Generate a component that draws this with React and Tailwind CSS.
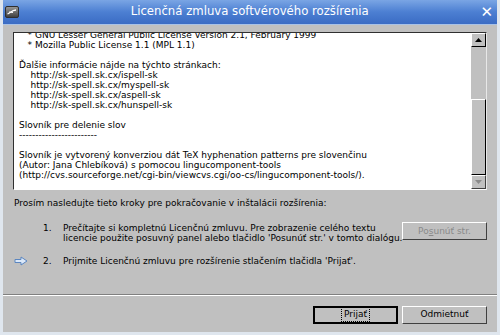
import React from "react";

const font = { fontFamily: '"DejaVu Sans", sans-serif' };

const licenseLines = [
  "   * GNU Lesser General Public License Version 2.1, February 1999",
  "   * Mozilla Public License 1.1 (MPL 1.1)",
  "",
  "Ďalšie informácie nájde na týchto stránkach:",
  "    http://sk-spell.sk.cx/ispell-sk",
  "    http://sk-spell.sk.cx/myspell-sk",
  "    http://sk-spell.sk.cx/aspell-sk",
  "    http://sk-spell.sk.cx/hunspell-sk",
  "",
  "Slovník pre delenie slov",
  "------------------------",
  "",
  "Slovník je vytvorený konverziou dát TeX hyphenation patterns pre slovenčinu",
  "(Autor: Jana Chlebíková) s pomocou lingucomponent-tools",
  "(http://cvs.sourceforge.net/cgi-bin/viewcvs.cgi/oo-cs/lingucomponent-tools/).",
];

const WindowIcon = () => (
  <svg width="14" height="12" viewBox="0 0 14 12">
    <defs>
      <linearGradient id="wi" x1="0" y1="0" x2="0" y2="1">
        <stop offset="0" stopColor="#9a9a9a" />
        <stop offset="1" stopColor="#3c3c3c" />
      </linearGradient>
    </defs>
    <rect x="0.5" y="0.5" width="13" height="11" rx="1.5" fill="url(#wi)" stroke="#2e2e2e" />
    <path d="M2.5 8 C5 7 7 4 11 4" stroke="#fff" strokeWidth="1.3" fill="none" />
    <path d="M4 6 L8 6.5" stroke="#fff" strokeWidth="1" fill="none" />
  </svg>
);

const ArrowIcon = () => (
  <svg width="14" height="10" viewBox="0 0 14 10">
    <path
      d="M1 3.5 H7 V1 L13 5 L7 9 V6.5 H1 Z"
      fill="#dbe8f8"
      stroke="#5b86c0"
      strokeWidth="1"
      strokeLinejoin="round"
    />
  </svg>
);

const Triangle = ({ up, color }) => (
  <svg width="7" height="4" viewBox="0 0 7 4">
    <path d={up ? "M0 4 L3.5 0 L7 4 Z" : "M0 0 L3.5 4 L7 0 Z"} fill={color} />
  </svg>
);

const Button = ({ children, isDefault, disabled }) => (
  <div
    className={`w-[85px] h-[18px] shrink-0 flex items-center justify-center text-[9px] bg-[#c0c0c0] ${
      isDefault
        ? "border-2 border-black"
        : "border border-t-white border-l-white border-r-[#404040] border-b-[#404040]"
    } ${disabled ? "text-[#8a8a8a]" : "text-black"}`}
  >
    {children}
  </div>
);

export default function App() {
  return (
    <div
      className="w-[500px] h-[335px] flex flex-col bg-[#c0c0c0] border-x-[3px] border-b-[3px] border-[#dfe6ee] overflow-hidden"
      style={font}
    >
      <div className="h-[25px] -mx-[3px] flex items-center px-[5px] bg-gradient-to-b from-[#7aa5e4] via-[#4c7fd2] to-[#3b6cc4] border-b border-[#a9c2e6]">
        <WindowIcon />
        <div className="flex-1 text-center text-white text-[11.7px]">
          Licenčná zmluva softvérového rozšírenia
        </div>
        <span className="text-white text-[15px] font-bold leading-none mr-[2px]">✕</span>
      </div>

      <div className="flex-1 flex flex-col px-[10px] pt-[7px]">
        <div className="h-[158px] flex border-t border-l border-t-[#303030] border-l-[#303030] border-b border-r border-b-white border-r-[#e8e8e8] bg-white">
          <div className="flex-1 overflow-hidden pl-[5px]">
            <div className="-mt-[3px] text-[9px] leading-[10px] text-black whitespace-pre">
              {licenseLines.map((l, i) => (
                <div key={i} className="h-[10px]">
                  {l}
                </div>
              ))}
            </div>
          </div>
          <div className="w-[15px] flex flex-col bg-[#c0c0c0]">
            <div className="h-[14px] flex items-center justify-center border border-t-white border-l-white border-r-black border-b-black bg-[#c0c0c0]">
              <Triangle up color="#000" />
            </div>
            <div className="h-[52px]" />
            <div className="flex-1 border border-t-white border-l-white border-r-black border-b-black" />
            <div className="h-[14px] flex items-center justify-center border border-t-white border-l-white border-r-[#404040] border-b-[#404040]">
              <Triangle color="#8a8a8a" />
            </div>
          </div>
        </div>

        <div className="mt-[8px] pl-[1px] text-[9px] leading-[10px] text-black whitespace-nowrap">
          Prosím nasledujte tieto kroky pre pokračovanie v inštalácii rozšírenia:
        </div>

        <div className="mt-[15px] flex items-start text-[9px] leading-[10px] whitespace-nowrap">
          <div className="w-[30px] shrink-0" />
          <div className="w-[20px] shrink-0">1.</div>
          <div className="flex-1 min-w-0">
            <div>Prečítajte si kompletnú Licenčnú zmluvu. Pre zobrazenie celého textu</div>
            <div>licencie použite posuvný panel alebo tlačidlo 'Posunúť str.' v tomto dialógu.</div>
          </div>
          <div className="-mt-[1px] shrink-0">
            <Button disabled>
              Po<span className="underline">s</span>unúť str.
            </Button>
          </div>
        </div>

        <div className="mt-[13px] flex items-center text-[9px] leading-[10px] whitespace-nowrap">
          <div className="w-[30px] shrink-0 pl-[1px] flex items-center">
            <ArrowIcon />
          </div>
          <div className="w-[20px] shrink-0">2.</div>
          <div className="flex-1">
            Prijmite Licenčnú zmluvu pre rozšírenie stlačením tlačidla 'Prijať'.
          </div>
        </div>

        <div className="mt-auto -mx-[10px] border-t border-t-[#808080] border-b border-b-white" />
        <div className="h-[36px] flex items-center justify-end gap-[4px] pt-[1px]">
          <Button isDefault>
            <span className="px-[2px] outline outline-1 outline-dotted outline-black">Prijať</span>
          </Button>
          <Button>Odmietnuť</Button>
        </div>
      </div>
    </div>
  );
}
